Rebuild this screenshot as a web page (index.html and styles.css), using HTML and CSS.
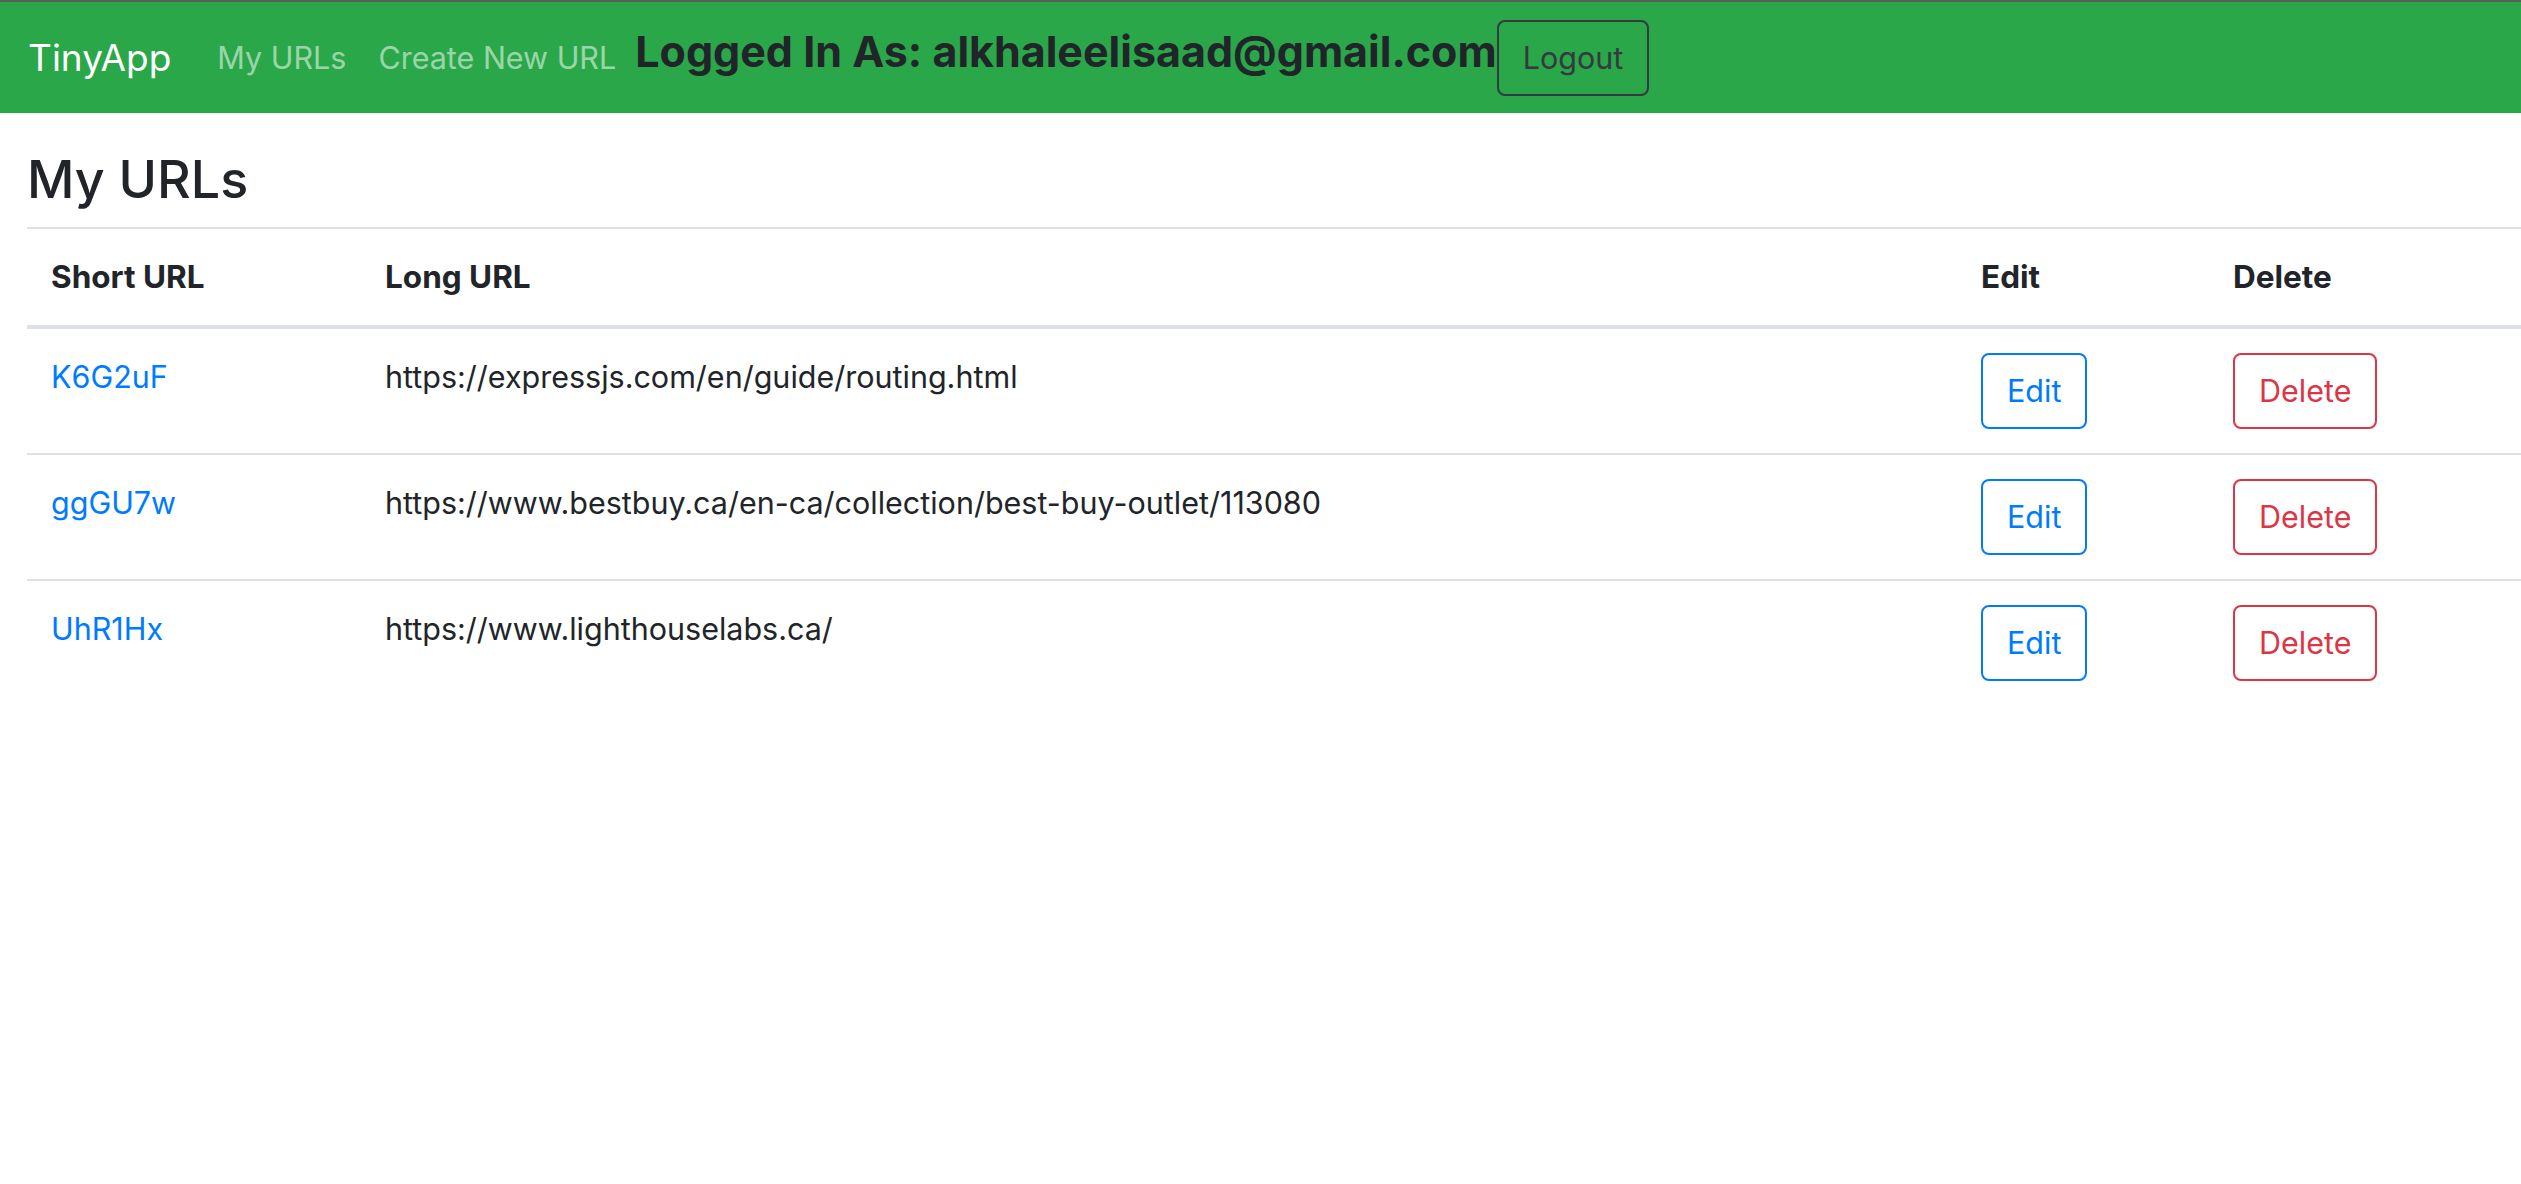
FILE: index.html
```html
<!DOCTYPE html>
<html lang="en">
<head>
<meta charset="utf-8">
<title>TinyApp</title>
<link rel="stylesheet" href="styles.css">
</head>
<body>
<nav class="navbar">
  <a class="brand" href="#">TinyApp</a>
  <a class="nav-link" href="#">My URLs</a>
  <a class="nav-link" href="#">Create New URL</a>
  <h4 class="user">Logged In As: alkhaleelisaad@gmail.com</h4>
  <button class="btn btn-dark-outline">Logout</button>
</nav>
<main class="main">
  <h3 class="title">My URLs</h3>
  <table class="urls">
    <thead>
      <tr>
        <th class="col-short">Short URL</th>
        <th class="col-long">Long URL</th>
        <th class="col-edit">Edit</th>
        <th class="col-delete">Delete</th>
      </tr>
    </thead>
    <tbody>
      <tr>
        <td><a class="short" href="#">K6G2uF</a></td>
        <td>https://expressjs.com/en/guide/routing.html</td>
        <td><button class="btn btn-primary-outline">Edit</button></td>
        <td><button class="btn btn-danger-outline">Delete</button></td>
      </tr>
      <tr>
        <td><a class="short" href="#">ggGU7w</a></td>
        <td>https://www.bestbuy.ca/en-ca/collection/best-buy-outlet/113080</td>
        <td><button class="btn btn-primary-outline">Edit</button></td>
        <td><button class="btn btn-danger-outline">Delete</button></td>
      </tr>
      <tr>
        <td><a class="short" href="#">UhR1Hx</a></td>
        <td>https://www.lighthouselabs.ca/</td>
        <td><button class="btn btn-primary-outline">Edit</button></td>
        <td><button class="btn btn-danger-outline">Delete</button></td>
      </tr>
    </tbody>
  </table>
</main>
</body>
</html>
```
FILE: styles.css
```css
* { box-sizing: border-box; }

body {
  margin: 0;
  font-family: Inter, "Noto Sans", "Liberation Sans", sans-serif;
  font-size: 30.5px;
  line-height: 48px;
  color: #212529;
  background: #fff;
}

.navbar {
  display: flex;
  align-items: center;
  height: 113px;
  padding: 0 0 0 28px;
  background: #29a749;
  border-top: 2px solid #5b5f5c;
}

.brand {
  font-size: 37px;
  line-height: 60px;
  color: #fff;
  text-decoration: none;
  margin-right: 30px;
}

.nav-link {
  font-size: 30.5px;
  line-height: 48px;
  color: rgba(255, 255, 255, 0.55);
  text-decoration: none;
  padding: 0 16px;
}

.user {
  margin: 0 0 14px 3px;
  font-size: 43px;
  line-height: 58px;
  font-weight: 700;
  color: #212529;
}

.btn {
  font-family: inherit;
  font-size: 30.5px;
  line-height: 48px;
  padding: 12px 24px;
  border: 2px solid;
  border-radius: 8px;
  background: transparent;
  cursor: pointer;
}

.btn-dark-outline { color: #343a40; border-color: #343a40; }
.btn-primary-outline { color: #007bff; border-color: #007bff; }
.btn-danger-outline { color: #dc3545; border-color: #dc3545; }

.main {
  padding: 0 0 0 27px;
}

.title {
  margin: 36px 0 16px;
  font-size: 52px;
  line-height: 62px;
  font-weight: 500;
}

.urls {
  width: 100%;
  border-collapse: collapse;
}

.urls th,
.urls td {
  padding: 24px;
  text-align: left;
  vertical-align: top;
  border-top: 2px solid #dee2e6;
}

.urls th {
  vertical-align: bottom;
  font-size: 31.5px;
  font-weight: 700;
  border-bottom: 4px solid #dee2e6;
}

.col-short { width: 334px; }
.col-long { width: 1596px; }
.col-edit { width: 252px; }

.short {
  color: #007bff;
  text-decoration: none;
}
```
